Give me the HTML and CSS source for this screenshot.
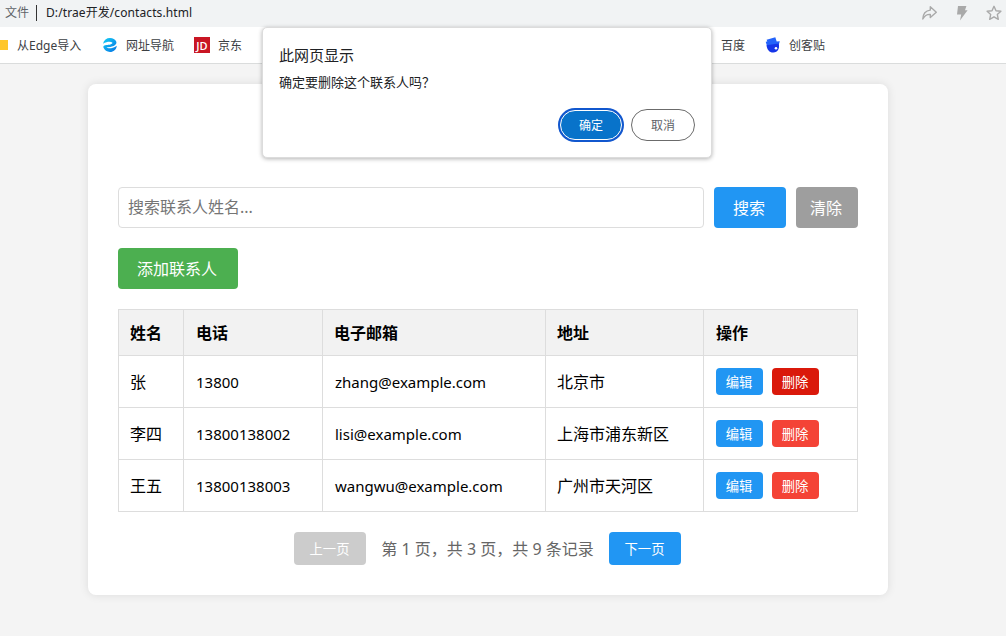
FILE: index.html
```
<!DOCTYPE html>
<html lang="zh-CN">
<head>
<meta charset="utf-8">
<title>contacts</title>
<link rel="stylesheet" href="styles.css">
</head>
<body>
<header class="address-bar">
  <span class="scheme">文件</span>
  <span class="divider"></span>
  <span class="url">D:/trae开发/contacts.html</span>
  <div class="tools">
    <svg width="16" height="16" viewBox="0 0 16 16" fill="none" stroke="#a9a9a9" stroke-width="1.4" stroke-linejoin="round"><path d="M8.300 1.800 14.300 7.200 8.300 12.600V9.400C5.200 9.200 2.600 10.600.8 14 1 8.800 3.500 5.600 8.300 5.100Z"/></svg>
    <svg width="16" height="16" viewBox="0 0 16 16" fill="#a9a9a9"><path d="M4 1h8.400L11 5.200h2.600L6 15.600 7.200 9.400H3Z"/></svg>
    <svg width="16" height="16" viewBox="0 0 16 16" fill="none" stroke="#a9a9a9" stroke-width="1.4" stroke-linejoin="round"><path d="m8 1.300 2 4.400 4.900.5-3.600 3.200 1 4.900L8 11.800l-4.300 2.500 1-4.900L1.100 6.200 6 5.700Z"/></svg>
  </div>
</header>
<nav class="bookmarks">
  <span class="bookmark folder"><i class="folder-icon"></i>从Edge导入</span>
  <span class="bookmark site"><svg width="16" height="16" viewBox="0 0 16 16"><defs><linearGradient id="e" x2="1" y2="1"><stop stop-color="#12cff5"/><stop offset="1" stop-color="#0873e4"/></linearGradient></defs><path fill="url(#e)" d="M1 6.700C1.900 3 4.500 1 8 1c2.900 0 5.200 1.300 6.200 3.400.9 2.100-1 3.900-3.400 4.900-1.900.8-4.300 1.200-6.300 1 1.600 1.600 5.700 1.500 10.300-1.600C14.300 12.600 11.700 15 8 15c-3 0-5.600-1.700-6.600-4.400C.9 9.200 2.300 8.200 4.500 8.100c2.600-.1 5.800-.9 6-2.300C8.800 4.100 5 4.500 1 6.700Z"/></svg>网址导航</span>
  <span class="bookmark jd"><i class="jd-icon">JD</i>京东</span>
  <span class="bookmark baidu">百度</span>
  <span class="bookmark design"><svg width="16" height="16" viewBox="0 0 16 16"><path fill="#2463fa" d="m1.600 2.700 8.700-2.400 1.400 4.100 3.100-.2-1 3.200L2 9.100.7 4.800l1.600-.4Z"/><path fill="#1535e8" d="M1.500 8.200 13.700 6.400c1.300 4.800-.9 8.900-5.300 9.100-3.800.2-6.400-2.800-6.900-7.300Z"/><circle cx="11" cy="11.300" r="1.300" fill="#fff"/></svg>创客贴</span>
</nav>
<main class="card">
  <form class="search">
    <input class="search-input" type="text" placeholder="搜索联系人姓名...">
    <button class="btn search-btn" type="button">搜索</button>
    <button class="btn clear-btn" type="button">清除</button>
  </form>
  <button class="btn add-btn" type="button">添加联系人</button>
  <table class="contacts">
    <colgroup><col class="c-name"><col class="c-phone"><col class="c-mail"><col class="c-addr"><col class="c-ops"></colgroup>
    <thead><tr><th>姓名</th><th class="phone">电话</th><th>电子邮箱</th><th>地址</th><th class="last">操作</th></tr></thead>
    <tbody>
      <tr><td>张</td><td class="latin phone">13800</td><td class="latin">zhang@example.com</td><td>北京市</td><td class="last"><div class="ops"><button class="small edit">编辑</button><button class="small delete active">删除</button></div></td></tr>
      <tr><td>李四</td><td class="latin phone">13800138002</td><td class="latin">lisi@example.com</td><td>上海市浦东新区</td><td class="last"><div class="ops"><button class="small edit">编辑</button><button class="small delete">删除</button></div></td></tr>
      <tr><td>王五</td><td class="latin phone">13800138003</td><td class="latin">wangwu@example.com</td><td>广州市天河区</td><td class="last"><div class="ops"><button class="small edit">编辑</button><button class="small delete">删除</button></div></td></tr>
    </tbody>
  </table>
  <div class="pager">
    <button class="page-btn disabled" type="button">上一页</button>
    <span class="page-info">第 1 页，共 3 页，共 9 条记录</span>
    <button class="page-btn" type="button">下一页</button>
  </div>
</main>
<section class="dialog" role="dialog">
  <h2 class="dialog-title">此网页显示</h2>
  <p class="dialog-text">确定要删除这个联系人吗？</p>
  <div class="dialog-actions">
    <button class="pill ok" type="button">确定</button>
    <button class="pill cancel" type="button">取消</button>
  </div>
</section>
</body>
</html>
```

FILE: styles.css
```
* { box-sizing: border-box; }
body {
  margin: 0;
  height: 636px;
  overflow: hidden;
  position: relative;
  background: #f4f4f4;
  font-family: "Noto Sans", "Noto Sans CJK SC", sans-serif;
  color: #000;
}
button { font-family: inherit; border: 0; padding: 0; color: #fff; white-space: nowrap; }

.address-bar {
  display: flex;
  align-items: center;
  height: 27px;
  padding: 0 4px 2px 5px;
  background: #f1f3f4;
  font-size: 12px;
  line-height: 18px;
}
.scheme { color: #5f6368; }
.divider { width: 1px; height: 16px; margin: 0 9px 0 7px; background: #333; }
.url { color: #202124; letter-spacing: .09px; }
.tools { display: flex; gap: 16px; margin-left: auto; }

.bookmarks {
  display: flex;
  align-items: center;
  height: 37px;
  background: #fff;
  border-bottom: 1px solid #dadcdc;
  font-size: 12px;
  color: #3c4043;
}
.bookmark { display: flex; align-items: center; white-space: nowrap; }
.folder { width: 102px; gap: 9px; }
.folder-icon { width: 8px; height: 10px; background: #ffc629; }
.site { width: 92px; gap: 8px; }
.jd { width: 527px; gap: 8px; }
.jd-icon {
  width: 16px;
  height: 16px;
  background: #c91623;
  color: #fff;
  font: normal 600 11px/17px "Open Sans", sans-serif;
  text-align: center;
}
.baidu { width: 44px; }
.design { gap: 8px; }

.card {
  width: 800px;
  height: 511px;
  margin: 20px 0 0 88px;
  padding: 103px 30px 30px;
  background: #fff;
  border-radius: 8px;
  box-shadow: 0 0 10px rgba(0, 0, 0, .1);
}
.search { display: flex; gap: 10px; height: 41px; margin-bottom: 20px; }
.search-input {
  flex: 1;
  min-width: 0;
  padding: 0 9px 2px;
  border: 1px solid #ddd;
  border-radius: 4px;
  font: 16px "Noto Sans", "Noto Sans CJK SC", sans-serif;
}
.search-input::placeholder { color: #757575; }
.btn { height: 41px; padding: 0 2px 2px 0; border-radius: 4px; font-size: 16px; }
.search-btn { width: 72px; background: #2196f3; }
.clear-btn { width: 62px; background: #9e9e9e; }
.add-btn { display: block; width: 120px; background: #4caf50; }

.contacts {
  width: 740px;
  margin-top: 20px;
  table-layout: fixed;
  border-collapse: collapse;
  font-size: 16px;
  line-height: 22px;
}
.c-name { width: 65px; }
.c-phone { width: 139px; }
.c-mail { width: 223px; }
.c-addr { width: 158px; }
.contacts th, .contacts td {
  padding: 0 11px;
  border: 1px solid #ddd;
  text-align: left;
  white-space: nowrap;
}
.contacts .last, .contacts .phone { padding-left: 12px; }
.contacts th { height: 46px; background: #f2f2f2; font-weight: 700; }
.contacts td { height: 52px; }
.contacts .latin { font-size: 15px; }
.contacts td:nth-child(3) { padding-left: 12px; }
.ops { display: flex; gap: 9px; }
.small { width: 47px; height: 27px; padding: 0 1px 1px 0; border-radius: 4px; font-size: 13.333px; }
.edit { background: #2196f3; }
.delete { background: #f44336; }
.delete.active { background: #da190b; }

.pager { display: flex; align-items: center; height: 33px; margin: 20px 0 0 176px; }
.page-btn { width: 72px; height: 33px; padding-right: 1px; border-radius: 4px; background: #2196f3; font-size: 13.333px; }
.page-btn.disabled { background: #ccc; }
.page-info { width: 243px; padding-bottom: 1px; text-align: center; font-size: 16px; color: #666; white-space: nowrap; }

.dialog {
  position: absolute;
  left: 262px;
  top: 27px;
  width: 450px;
  height: 131px;
  padding: 17px 16px 0;
  background: #fff;
  border: 1px solid #dcdcdc;
  border-radius: 5px;
  box-shadow: 0 1px 4px rgba(0, 0, 0, .3);
}
.dialog-title { margin: 0; font-size: 15px; font-weight: 400; line-height: 20px; color: #202124; }
.dialog-text { margin: 8px 0 0; font-size: 13px; line-height: 18px; color: #202124; }
.dialog-actions { display: flex; justify-content: flex-end; gap: 9px; margin-top: 18px; }
.pill { width: 64px; height: 32px; border-radius: 16px; font-size: 12px; }
.ok { background: #0873ca; border: 1px solid #fff; box-shadow: 0 0 0 2px #1157ce; height: 30px; width: 62px; margin-top: 1px; }
.cancel { background: #fff; border: 1px solid #6b6b6b; color: #5f6368; }
```
